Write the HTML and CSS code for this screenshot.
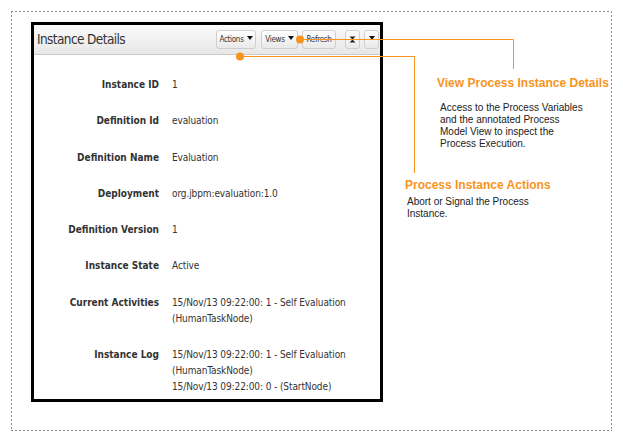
FILE: index.html
```html
<!DOCTYPE html>
<html>
<head>
<meta charset="utf-8">
<link rel="stylesheet" href="styles.css">
</head>
<body>
<div class="canvas">
  <div class="panel">
    <div class="header">
      <div class="title">Instance Details</div>
      <div class="tools">
        <div class="btn btn-actions">Actions<span class="caret"></span></div>
        <div class="btn btn-views">Views<span class="caret"></span></div>
        <div class="btn btn-refresh">Refresh</div>
        <div class="btn sq sep"><svg width="7" height="7" viewBox="0 0 7 7"><path d="M0.5 0.5h6l-3 3z M0.5 6.5h6l-3 -3z" fill="#222"/></svg></div>
        <div class="btn sq"><span class="caret"></span></div>
      </div>
    </div>
    <div class="details">
      <div class="label">Instance ID</div><div class="value">1</div>
      <div class="label">Definition Id</div><div class="value">evaluation</div>
      <div class="label">Definition Name</div><div class="value">Evaluation</div>
      <div class="label">Deployment</div><div class="value">org.jbpm:evaluation:1.0</div>
      <div class="label">Definition Version</div><div class="value">1</div>
      <div class="label">Instance State</div><div class="value">Active</div>
      <div class="label">Current Activities</div><div class="value">15/Nov/13 09:22:00: 1 - Self Evaluation<br>(HumanTaskNode)</div>
      <div class="label">Instance Log</div><div class="value">15/Nov/13 09:22:00: 1 - Self Evaluation<br>(HumanTaskNode)<br>15/Nov/13 09:22:00: 0 - (StartNode)</div>
    </div>
  </div>

  <svg class="leaders" width="623" height="442" viewBox="0 0 623 442">
    <path d="M300 39.5H513.5V69" fill="none" stroke="#f7941d" stroke-width="1"/>
    <path d="M240 56.5H414.5V173" fill="none" stroke="#f7941d" stroke-width="1"/>
    <circle cx="300" cy="39.5" r="4" fill="#f7941d"/>
    <circle cx="240" cy="56.5" r="4" fill="#f7941d"/>
  </svg>

  <div class="note note-views">
    <div class="note-title">View Process Instance Details</div>
    <div class="note-text">Access to the Process Variables<br>and the annotated Process<br>Model View to inspect the<br>Process Execution.</div>
  </div>
  <div class="note note-actions">
    <div class="note-title">Process Instance Actions</div>
    <div class="note-text">Abort or Signal the Process<br>Instance.</div>
  </div>
</div>
</body>
</html>
```

FILE: styles.css
```css
html, body {
  margin: 0;
  padding: 0;
  background: #fff;
}
body {
  width: 623px;
  height: 442px;
  position: relative;
  overflow: hidden;
}
.canvas {
  position: absolute;
  left: 11px;
  top: 11px;
  width: 601px;
  height: 420px;
  background:
    repeating-linear-gradient(90deg, #8a8a8a 0 2px, transparent 2px 4px) left top / 100% 1px no-repeat,
    repeating-linear-gradient(90deg, #8a8a8a 0 2px, transparent 2px 4px) left bottom / 100% 1px no-repeat,
    repeating-linear-gradient(180deg, #8a8a8a 0 2px, transparent 2px 4px) left top / 1px 100% no-repeat,
    repeating-linear-gradient(180deg, #8a8a8a 0 2px, transparent 2px 4px) right top / 1px 100% no-repeat;
  padding: 11px 0 0 20px;
  box-sizing: border-box;
}
.panel {
  width: 352px;
  height: 380px;
  box-sizing: border-box;
  border: 3px solid #000;
  background: #fff;
  font-family: "DejaVu Sans Condensed", "DejaVu Sans", sans-serif;
  color: #333;
}
.header {
  height: 30px;
  box-sizing: border-box;
  border-bottom: 1px solid #c9c9c9;
  background: linear-gradient(#fbfbfb, #e7e7e7);
  display: flex;
  align-items: center;
  justify-content: space-between;
  padding-left: 3px;
}
.title {
  font-size: 13.5px;
  color: #333;
  letter-spacing: -0.6px;
  margin-top: -1px;
}
.tools {
  display: flex;
  align-items: center;
  gap: 4px;
  margin-top: -1px;
  margin-right: 1px;
}
.btn {
  height: 19px;
  box-sizing: border-box;
  border: 1px solid #cfcfcf;
  border-radius: 3px;
  background: linear-gradient(#ffffff, #e9e9e9);
  font-size: 8px;
  color: #333;
  display: flex;
  align-items: center;
  justify-content: center;
  gap: 3px;
  padding: 0;
  letter-spacing: -0.3px;
}
.btn-actions {
  width: 40px;
}
.btn-views {
  width: 37px;
  margin-left: 1px;
}
.btn-refresh {
  width: 34px;
}
.btn.sq {
  width: 15px;
}
.btn.sep {
  margin-left: 5px;
}
.caret {
  display: inline-block;
  width: 0;
  height: 0;
  border-left: 3.5px solid transparent;
  border-right: 3.5px solid transparent;
  border-top: 4px solid #111;
  margin-top: -2px;
}
.details {
  display: grid;
  grid-template-columns: 125px 1fr;
  column-gap: 13px;
  row-gap: 20.3px;
  padding-top: 22px;
  line-height: 16px;
}
.label {
  text-align: right;
  font-weight: bold;
  font-size: 10px;
  color: #333;
}
.value {
  color: #333;
  font-size: 10px;
  letter-spacing: -0.1px;
  white-space: nowrap;
}
.leaders {
  position: absolute;
  left: -11px;
  top: -11px;
  pointer-events: none;
}
.note {
  position: absolute;
  font-family: "Liberation Sans", Arial, sans-serif;
}
.note-title {
  color: #f7941d;
  font-weight: bold;
  font-size: 12px;
  line-height: 14px;
}
.note-text {
  color: #222;
  font-size: 10px;
  line-height: 12px;
}
.note-views {
  left: 426px;
  top: 65px;
}
.note-views .note-text {
  margin-top: 12px;
  padding-left: 3px;
}
.note-actions {
  left: 394px;
  top: 167px;
}
.note-actions .note-text {
  margin-top: 4px;
  padding-left: 2px;
}
```
